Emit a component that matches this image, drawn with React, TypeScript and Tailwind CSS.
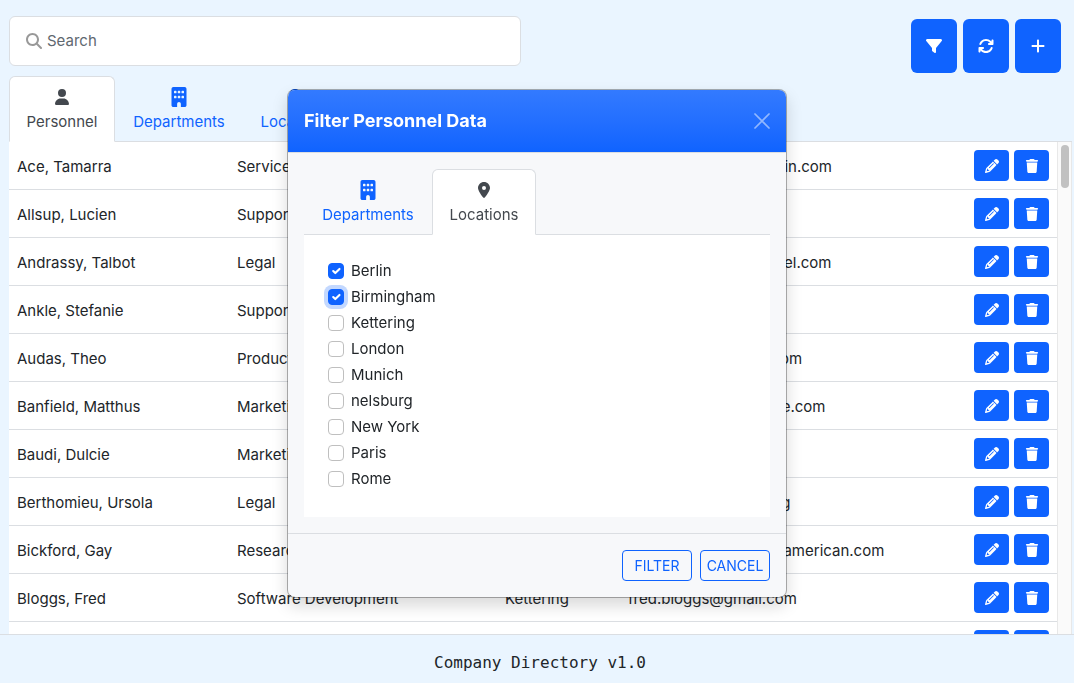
import { useState } from "react";
import {
  FaArrowsRotate,
  FaBuilding,
  FaFilter,
  FaLocationDot,
  FaMagnifyingGlass,
  FaPencil,
  FaPlus,
  FaTrash,
  FaUser,
} from "react-icons/fa6";
import type { ReactNode } from "react";

type Person = { name: string; department: string; location: string; email: string };

const people: Person[] = [
  { name: "Ace, Tamarra", department: "Services", location: "Munich", email: "tamarra.ace10@linkedin.com" },
  { name: "Allsup, Lucien", department: "Support", location: "Munich", email: "lallsup@goo.ne.jp" },
  { name: "Andrassy, Talbot", department: "Legal", location: "London", email: "t.tandrassy3@bigmodel.com" },
  { name: "Ankle, Stefanie", department: "Support", location: "Munich", email: "sankle@wix.com" },
  { name: "Audas, Theo", department: "Product Management", location: "London", email: "taudas4@newsvine.com" },
  { name: "Banfield, Matthus", department: "Marketing", location: "Rome", email: "mbanfield15@angelfire.com" },
  { name: "Baudi, Dulcie", department: "Marketing", location: "Rome", email: "dbaudi@npr.com" },
  { name: "Berthomieu, Ursola", department: "Legal", location: "London", email: "uberthomieu7@tim.org" },
  { name: "Bickford, Gay", department: "Research and Development", location: "Paris", email: "gbickford8@scientificamerican.com" },
  { name: "Bloggs, Fred", department: "Software Development", location: "Kettering", email: "fred.bloggs@gmail.com" },
  { name: "Boagey, Shaylynn", department: "Legal", location: "London", email: "sboagey@state.gov" },
];

const locations = [
  "Berlin",
  "Birmingham",
  "Kettering",
  "London",
  "Munich",
  "nelsburg",
  "New York",
  "Paris",
  "Rome",
];

function Tab({
  label,
  icon,
  width,
  active = false,
}: {
  label: string;
  icon: ReactNode;
  width: string;
  active?: boolean;
}) {
  return (
    <button
      type="button"
      role="tab"
      aria-selected={active}
      className={
        active
          ? `-mb-px flex flex-col items-center rounded-t-md border border-[#dbdee2] border-b-white bg-white py-[7px] text-[#43484e] ${width}`
          : `-mb-px flex flex-col items-center rounded-t-md border border-transparent py-[7px] text-[#0f63ff] ${width}`
      }
    >
      <span className="flex h-[26px] items-center text-base">{icon}</span>
      <span className="leading-6">{label}</span>
    </button>
  );
}

function ToolButton({ label, children }: { label: string; children: ReactNode }) {
  return (
    <button
      type="button"
      aria-label={label}
      className="flex h-[54px] w-[46px] items-center justify-center rounded-md bg-[#0f63ff] text-white"
    >
      {children}
    </button>
  );
}

function RowButton({ label, children }: { label: string; children: ReactNode }) {
  return (
    <button
      type="button"
      aria-label={label}
      className="flex h-[31px] w-[35px] items-center justify-center rounded bg-[#0f63ff] text-sm text-white"
    >
      {children}
    </button>
  );
}

function FilterDialog() {
  const [checked, setChecked] = useState<string[]>(["Berlin", "Birmingham"]);
  const toggle = (name: string) =>
    setChecked((list) => (list.includes(name) ? list.filter((n) => n !== name) : [...list, name]));

  return (
    <div className="fixed inset-0 flex items-start justify-center pt-[89px]">
      <div
        role="dialog"
        aria-labelledby="filter-title"
        className="w-full max-w-[500px] rounded-lg border border-black/30 bg-[#f7f8fa] bg-clip-padding shadow-[0_8px_16px_rgba(0,0,0,0.15)]"
      >
        <div className="flex h-[63px] items-center justify-between rounded-t-[7px] border-b border-[#dbdee2] bg-linear-to-b from-[#337aff] to-[#0f63ff] px-4 text-white">
          <h2 id="filter-title" className="text-lg font-bold">
            Filter Personnel Data
          </h2>
          <button type="button" aria-label="Close" className="opacity-50">
            <svg viewBox="0 0 16 16" className="size-4" fill="none" stroke="currentColor" strokeWidth="1.75" strokeLinecap="round">
              <path d="M1 1l14 14M15 1L1 15" />
            </svg>
          </button>
        </div>
        <div className="p-4">
          <div role="tablist" className="flex border-b border-[#dbdee2]">
            <Tab label="Departments" width="w-32" icon={<FaBuilding className="text-xl" />} />
            <Tab label="Locations" width="w-[104px]" icon={<FaLocationDot />} active />
          </div>
          <div className="bg-white p-6">
            {locations.map((name) => (
              <label key={name} className="mb-0.5 flex h-6 items-center gap-[7px]">
                <span className="relative flex size-4">
                  <input
                    type="checkbox"
                    checked={checked.includes(name)}
                    onChange={() => toggle(name)}
                    className={
                      name === "Birmingham"
                        ? "peer size-4 appearance-none rounded border border-[#bfbfbf] bg-white ring-4 ring-[#c3d8ff] checked:border-[#0f63ff] checked:bg-[#0f63ff]"
                        : "peer size-4 appearance-none rounded border border-[#bfbfbf] bg-white checked:border-[#0f63ff] checked:bg-[#0f63ff]"
                    }
                  />
                  <svg
                    viewBox="0 0 20 20"
                    className="pointer-events-none absolute inset-px hidden size-3.5 text-white peer-checked:block"
                    fill="none"
                    stroke="currentColor"
                    strokeWidth="3"
                    strokeLinecap="round"
                    strokeLinejoin="round"
                  >
                    <path d="m6 10 3 3 6-6" />
                  </svg>
                </span>
                {name}
              </label>
            ))}
          </div>
        </div>
        <div className="flex justify-end gap-2 border-t border-[#dbdee2] p-4 text-sm text-[#0f63ff]">
          <button type="button" className="h-[31px] w-[70px] rounded border border-[#0f63ff]">
            FILTER
          </button>
          <button type="button" className="h-[31px] w-[70px] rounded border border-[#0f63ff]">
            CANCEL
          </button>
        </div>
      </div>
    </div>
  );
}

export default function App() {
  return (
    <div className="flex h-screen flex-col overflow-hidden bg-[#eaf5ff] font-['Inter','Liberation_Sans',sans-serif] text-[15px] text-[#212529]">
      <header className="flex items-start justify-between gap-4 pt-4 pr-[13px] pl-[9px]">
        <label className="flex h-[50px] w-full max-w-[512px] items-center gap-[5px] rounded-md border border-[#dbdee2] bg-white px-4">
          <FaMagnifyingGlass className="text-base text-[#999]" />
          <input
            type="text"
            aria-label="Search"
            placeholder="Search"
            className="min-w-0 flex-1 bg-transparent outline-none placeholder:text-[#5f6870]"
          />
        </label>
        <div className="flex gap-1.5 pt-[3px] text-base">
          <ToolButton label="Filter">
            <FaFilter />
          </ToolButton>
          <ToolButton label="Refresh">
            <FaArrowsRotate />
          </ToolButton>
          <ToolButton label="Add">
            <FaPlus />
          </ToolButton>
        </div>
      </header>

      <div role="tablist" className="mt-[3px] mr-0.5 ml-[9px] flex shrink-0 border-b border-[#dbdee2]">
        <Tab label="Personnel" width="w-[106px]" icon={<FaUser />} active />
        <Tab label="Departments" width="w-32" icon={<FaBuilding className="text-xl" />} />
        <Tab label="Locations" width="w-[104px]" icon={<FaLocationDot />} />
      </div>

      <main className="mr-0.5 ml-[9px] flex min-h-0 flex-1 overflow-hidden">
        <div className="min-w-0 flex-1 overflow-hidden">
          <table className="w-full table-fixed border-separate border-spacing-0 bg-white">
            <colgroup>
              <col className="w-[220px]" />
              <col className="w-[268px]" />
              <col className="w-[123px]" />
              <col />
              <col className="w-[91px]" />
            </colgroup>
            <tbody>
              {people.map((person) => (
                <tr key={person.name} className="whitespace-nowrap *:h-12 *:border-b *:border-[#dbdee2] *:px-2">
                  <td className="pt-[3px]">{person.name}</td>
                  <td className="pt-[3px]">{person.department}</td>
                  <td className="pt-[3px]">{person.location}</td>
                  <td className="pt-[3px]">{person.email}</td>
                  <td>
                    <div className="flex justify-end gap-[5px]">
                      <RowButton label={`Edit ${person.name}`}>
                        <FaPencil />
                      </RowButton>
                      <RowButton label={`Delete ${person.name}`}>
                        <FaTrash />
                      </RowButton>
                    </div>
                  </td>
                </tr>
              ))}
            </tbody>
          </table>
        </div>
        <div aria-hidden="true" className="w-[15px] border-x border-[#e8e8e8] bg-[#fafafa] px-[3px] pt-[3px]">
          <div className="h-[43px] w-2 rounded-full bg-[#c1c1c1]" />
        </div>
      </main>

      <footer className="flex h-[49px] shrink-0 items-center justify-center border-t border-[#dbdee2] pt-2 pl-1.5 font-['DejaVu_Sans_Mono',monospace] text-base">
        Company Directory v1.0
      </footer>

      <FilterDialog />
    </div>
  );
}
